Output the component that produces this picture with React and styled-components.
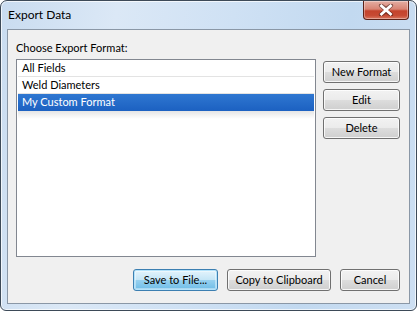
import React from "react";
import styled, { createGlobalStyle, css } from "styled-components";

const Global = createGlobalStyle`
  html, body { margin: 0; padding: 0; background: #ffffff; }
  body { font-family: Lato, "Noto Sans", sans-serif; font-size: 11px; color: #000; }
  * { box-sizing: border-box; }
`;

const Window = styled.div`
  width: 417px;
  height: 311px;
  border: 1px solid #3d4a58;
  border-radius: 7px 7px 6px 6px;
  background: linear-gradient(100deg, #c9dcf0 0%, #dbe8f6 25%, #cfe1f4 50%, #c2d9f0 75%, #cddff2 100%);
  box-shadow: inset 0 0 0 1px rgba(255, 255, 255, 0.7);
  display: flex;
  flex-direction: column;
  padding: 0 6px 6px 6px;
  overflow: hidden;
`;

const TitleBar = styled.div`
  height: 28px;
  display: flex;
  align-items: flex-start;
  justify-content: space-between;
  flex: none;
`;

const Title = styled.div`
  padding: 6px 0 0 1px;
  font-size: 12px;
  line-height: 16px;
  color: #000;
`;

const CloseButton = styled.div`
  width: 46px;
  height: 19px;
  margin-right: 1px;
  border: 1px solid #5c2218;
  border-top: none;
  border-radius: 0 0 4px 4px;
  background: linear-gradient(#e4aea3 0%, #d88474 45%, #c4432c 55%, #c74a33 80%, #d9775f 100%);
  box-shadow: inset 0 0 0 1px rgba(255, 255, 255, 0.35);
  display: flex;
  align-items: center;
  justify-content: center;
`;

const Client = styled.div`
  flex: 1;
  border: 1px solid #8a97a6;
  background: #f0f0f0;
  display: grid;
  grid-template-columns: 300px 77px;
  grid-template-rows: auto auto auto;
  column-gap: 7px;
  row-gap: 0;
  padding: 10px 8px 0 8px;
  align-content: start;
  align-items: start;
`;

const Label = styled.div`
  grid-column: 1 / span 2;
  font-size: 11px;
  line-height: 15px;
  height: 15px;
`;

const ListBox = styled.div`
  border: 1px solid #828790;
  background: #fff;
  margin-top: 4px;
  height: 198px;
  padding: 0 1px;
  display: flex;
  flex-direction: column;
`;

const Item = styled.div`
  position: relative;
  height: 17px;
  line-height: 16px;
  padding-left: 4px;
  font-size: 11px;
  border-bottom: 1px solid ${(p) => (p.$last ? "transparent" : "#e3e3e3")};
  ${(p) =>
    p.$selected &&
    css`
      background: linear-gradient(#2f77d1, #1d62c2);
      color: #fff;
      border-bottom-color: #1d62c2;
      &::after {
        content: "";
        position: absolute;
        left: 0;
        right: 0;
        top: 17px;
        height: 8px;
        background: linear-gradient(rgba(0, 0, 0, 0.10), rgba(0, 0, 0, 0));
      }
    `}
`;

const SideButtons = styled.div`
  margin-top: 6px;
  display: flex;
  flex-direction: column;
  gap: 6px;
`;

const Button = styled.button`
  height: 22px;
  width: ${(p) => p.$w || 77}px;
  font-family: inherit;
  font-size: 11px;
  color: #000;
  padding: 0;
  border: 1px solid #707070;
  border-radius: 3px;
  background: linear-gradient(#f2f2f2 0%, #ebebeb 50%, #dddddd 50%, #cfcfcf 100%);
  box-shadow: inset 0 0 0 1px rgba(255, 255, 255, 0.8);
  line-height: 18px;
  ${(p) =>
    p.$default &&
    css`
      border-color: #3c7fb1;
      background: linear-gradient(#e5f4fc 0%, #c4e5f6 50%, #98d1ef 50%, #6cbce7 100%);
      box-shadow: inset 0 0 0 1px #b4e3fb, inset 0 0 0 2px rgba(255, 255, 255, 0.4);
    `}
`;

const Footer = styled.div`
  grid-column: 1 / span 2;
  margin-top: 12px;
  display: flex;
  justify-content: flex-end;
  gap: 9px;
`;

const CloseX = () => (
  <svg width="16" height="12" viewBox="0 0 16 12">
    <path
      d="M3 1.5 L8 5 L13 1.5 M3 10.5 L8 7 L13 10.5 M3 1.5 L13 10.5 M13 1.5 L3 10.5"
      stroke="#3a1510"
      strokeWidth="4.2"
      strokeLinecap="round"
      fill="none"
      opacity="0.55"
    />
    <path d="M3.5 2 L12.5 10 M12.5 2 L3.5 10" stroke="#ffffff" strokeWidth="2.8" strokeLinecap="square" fill="none" />
  </svg>
);

export default function App() {
  const items = ["All Fields", "Weld Diameters", "My Custom Format"];
  return (
    <>
      <Global />
      <Window>
        <TitleBar>
          <Title>Export Data</Title>
          <CloseButton>
            <CloseX />
          </CloseButton>
        </TitleBar>
        <Client>
          <Label>Choose Export Format:</Label>
          <ListBox>
            {items.map((it, i) => (
              <Item key={it} $selected={i === 2} $last={i === items.length - 1}>
                {it}
              </Item>
            ))}
          </ListBox>
          <SideButtons>
            <Button>New Format</Button>
            <Button>Edit</Button>
            <Button>Delete</Button>
          </SideButtons>
          <Footer>
            <Button $default $w={85}>Save to File...</Button>
            <Button $w={104}>Copy to Clipboard</Button>
            <Button $w={60}>Cancel</Button>
          </Footer>
        </Client>
      </Window>
    </>
  );
}
